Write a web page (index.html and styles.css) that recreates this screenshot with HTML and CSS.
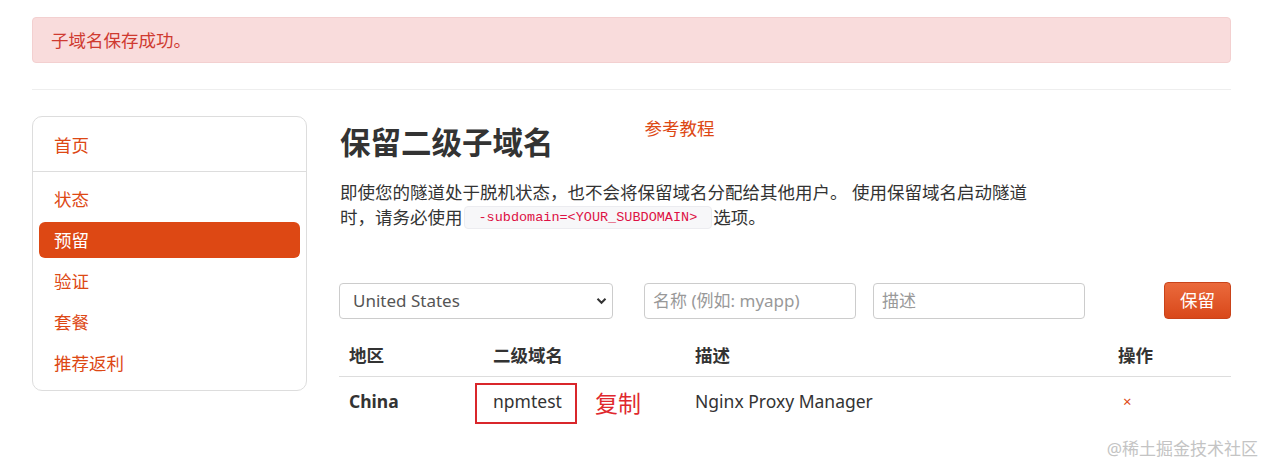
FILE: index.html
```html
<!DOCTYPE html>
<html lang="zh-CN">
<head>
<meta charset="utf-8">
<title>保留二级子域名</title>
<link rel="stylesheet" href="styles.css">
</head>
<body>
<div class="page">
  <div class="alert">子域名保存成功。</div>
  <div class="rule"></div>
  <div class="layout">
    <nav class="side">
      <a class="side-item" href="#">首页</a>
      <div class="side-divider"></div>
      <a class="side-item" href="#">状态</a>
      <a class="side-item active" href="#">预留</a>
      <a class="side-item" href="#">验证</a>
      <a class="side-item" href="#">套餐</a>
      <a class="side-item" href="#">推荐返利</a>
    </nav>
    <main class="main">
      <div class="title-row">
        <h2 class="title">保留二级子域名</h2>
        <a class="tutorial" href="#">参考教程</a>
      </div>
      <p class="desc">即使您的隧道处于脱机状态，也不会将保留域名分配给其他用户。 使用保留域名启动隧道时，请务必使用<code class="code">-subdomain=&lt;YOUR_SUBDOMAIN&gt;</code>选项。</p>
      <form class="form-row">
        <div class="select-wrap">
          <select class="select">
            <option>United States</option>
            <option>China</option>
          </select>
          <svg class="chev" width="11" height="8" viewBox="0 0 11 8"><path d="M1.5 1.8 L5.5 5.8 L9.5 1.8" fill="none" stroke="#333" stroke-width="2"/></svg>
        </div>
        <input class="input name" type="text" placeholder="名称 (例如: myapp)">
        <input class="input descr" type="text" placeholder="描述">
        <button class="btn" type="button">保留</button>
      </form>
      <table class="table">
        <thead>
          <tr>
            <th class="c1">地区</th>
            <th class="c2">二级域名</th>
            <th class="c3">描述</th>
            <th class="c4">操作</th>
          </tr>
        </thead>
        <tbody>
          <tr>
            <td class="c1 bold">China</td>
            <td class="c2 sub">npmtest<span class="annot-box"></span><span class="annot-text">复制</span></td>
            <td class="c3">Nginx Proxy Manager</td>
            <td class="c4"><a class="del" href="#">×</a></td>
          </tr>
        </tbody>
      </table>
    </main>
  </div>
</div>
<div class="watermark">@稀土掘金技术社区</div>
</body>
</html>
```

FILE: styles.css
```css
* { box-sizing: border-box; }
html, body { margin: 0; padding: 0; background: #fff; }
body {
  font-family: "Noto Sans", "Noto Sans CJK SC", sans-serif;
  font-size: 17.5px;
  line-height: 25px;
  color: #333;
  position: relative;
  width: 1267px;
  height: 465px;
  overflow: hidden;
}
a { text-decoration: none; }
.page {
  width: 1199px;
  margin-left: 32px;
  padding-top: 17px;
}
.alert {
  height: 46px;
  background: #f9dcdc;
  border: 1px solid #f3d0d0;
  border-radius: 4px;
  color: #cf3a30;
  padding: 9px 18px;
  line-height: 26px;
}
.rule {
  height: 1px;
  background: #eee;
  margin-top: 26px;
}
.layout {
  display: grid;
  grid-template-columns: 275px 1fr;
  gap: 32px;
  margin-top: 26px;
}
.side {
  border: 1px solid #ddd;
  border-radius: 10px;
  padding: 10px 6px 9px;
  display: flex;
  flex-direction: column;
  align-self: start;
}
.side-item {
  height: 36px;
  line-height: 36px;
  padding-left: 15px;
  color: #dd4814;
  border-radius: 6px;
  margin-bottom: 5px;
}
.side-item:last-child { margin-bottom: 0; }
.side-item.active { background: #dd4814; color: #fff; }
.side-divider {
  height: 1px;
  background: #ddd;
  margin: 3px -6px 9px;
}
.title-row {
  display: flex;
  align-items: flex-start;
}
.title {
  margin: 6px 0 0 1px;
  font-size: 30.5px;
  line-height: 40px;
  font-weight: 700;
  color: #333;
}
.tutorial {
  color: #dd4814;
  margin-left: 91px;
}
.desc {
  margin: 18px 0 0 1px;
  width: 695px;
}
.code {
  display: inline-block;
  vertical-align: top;
  margin: 1px 1px 0 1px;
  font-family: "Liberation Mono", monospace;
  font-size: 13.5px;
  line-height: 21px;
  color: #d14;
  background: #f7f7f9;
  border: 1px solid #ececf0;
  border-radius: 4px;
  padding: 0 14px;
}
.form-row {
  display: flex;
  align-items: center;
  margin-top: 52px;
}
.select-wrap {
  position: relative;
  width: 274px;
  height: 36px;
}
.select {
  appearance: none;
  -webkit-appearance: none;
  width: 100%;
  height: 36px;
  border: 1px solid #ccc;
  border-radius: 4px;
  background: #fff;
  font: inherit;
  font-size: 17px;
  color: #555;
  padding: 0 30px 0 13px;
}
.chev {
  position: absolute;
  right: 6px;
  top: 14px;
  pointer-events: none;
}
.input {
  width: 212px;
  height: 36px;
  border: 1px solid #ccc;
  border-radius: 4px;
  font: inherit;
  font-size: 17px;
  padding: 0 8px;
  color: #555;
}
.input::placeholder { color: #999; }
.name { margin-left: 31px; }
.descr { margin-left: 17px; }
.btn {
  margin-left: auto;
  width: 67px;
  height: 37px;
  border: 1px solid #c9431a;
  border-radius: 4px;
  background: linear-gradient(#ea6a3c, #d9481a);
  color: #fff;
  font: inherit;
  font-size: 17.5px;
  padding: 0;
}
.table {
  width: 100%;
  border-collapse: collapse;
  margin-top: 16px;
}
.table th {
  text-align: left;
  font-weight: 700;
  padding: 8px 10px;
  border-bottom: 1px solid #ddd;
}
.table td {
  padding: 11px 10px;
}
.c1 { width: 144px; }
.c2 { width: 202px; }
.c3 { width: 423px; }
.bold { font-weight: 700; }
.sub { position: relative; }
.annot-box {
  position: absolute;
  left: -8px;
  top: 6px;
  width: 102px;
  height: 41px;
  border: 2px solid #d9262b;
}
.annot-text {
  position: absolute;
  left: 112px;
  top: 11px;
  font-size: 23px;
  line-height: 30px;
  color: #e0282e;
}
.del {
  color: #dd4814;
  font-size: 15px;
  margin-left: 5px;
}
.watermark {
  position: absolute;
  right: 9px;
  bottom: 4px;
  font-size: 17px;
  line-height: 24px;
  color: #c4c4c4;
}
```
